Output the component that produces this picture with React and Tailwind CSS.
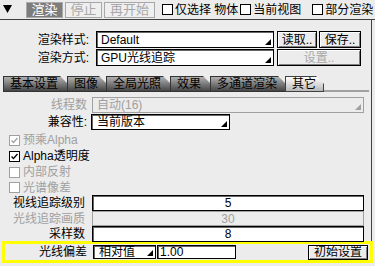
import React from "react";

function Tri({ disabled }) {
  return (
    <svg width="6" height="6" className="self-end mb-[2px] mr-[2px] shrink-0">
      <polygon points="6,0 6,6 0,6" fill={disabled ? "#a0a0a0" : "#000"} />
    </svg>
  );
}

function Check({ checked, disabled }) {
  const c = disabled ? "#a0a0a0" : "#000";
  return (
    <svg width="11" height="11" className="shrink-0">
      <rect x="0.5" y="0.5" width="10" height="10" fill="#fff" stroke={c} />
      {checked && <path d="M2.5 5.5 L4.5 7.5 L8.5 3" stroke={c} strokeWidth="1.3" fill="none" />}
    </svg>
  );
}

function Tab({ label, active, w }) {
  return (
    <div
      className={`${w} h-[16px] -mr-[1px] flex items-center pl-[6px] text-black [clip-path:polygon(0_0,calc(100%-8px)_0,100%_8px,100%_100%,0_100%)] ${
        active
          ? "bg-[linear-gradient(#ffffff,#b8b8b8)] border border-[#404040]"
          : "bg-[linear-gradient(#b0b0b0,#454545)] border border-[#333]"
      }`}
    >
      {label}
    </div>
  );
}

export default function App() {
  return (
    <div className="w-[375px] h-[266px] bg-[#ececec] overflow-hidden text-[12px] leading-[14px] text-black [font-family:'Liberation_Sans','Noto_Sans_CJK_SC',sans-serif]">
      {/* top bar */}
      <div className="h-[20px] flex items-center border-b border-[#404040] text-[13px] whitespace-nowrap">
        <svg width="9" height="8" className="ml-[3px] mb-[2px] shrink-0">
          <polygon points="0,0 9,0 4.5,8" fill="#000" />
        </svg>
        <div className="ml-[14px] w-[37px] h-[16px] shrink-0 flex items-center justify-center bg-[#7d7d7d] border border-[#a8a8a8] text-white">渲染</div>
        <div className="ml-[2px] w-[37px] h-[16px] shrink-0 flex items-center justify-center bg-[#efefef] border border-[#a8a8a8] text-[#a8a8a8]">停止</div>
        <div className="ml-[2px] w-[51px] h-[16px] shrink-0 flex items-center justify-center bg-[#efefef] border border-[#a8a8a8] text-[#a8a8a8]">再开始</div>
        <div className="ml-[7px] flex items-center gap-[2px] text-[12px] shrink-0">
          <Check />
          <span>仅选择 物体</span>
        </div>
        <div className="ml-[2px] flex items-center gap-[2px] text-[12px] shrink-0">
          <Check />
          <span>当前视图</span>
        </div>
        <div className="ml-[11px] flex items-center gap-[2px] text-[12px] shrink-0">
          <Check />
          <span>部分渲染</span>
        </div>
      </div>

      <div className="flex">
        <div className="w-[372px] h-[221px] border-r border-[#404040] flex flex-col">
          {/* row 1 */}
          <div className="mt-[11px] flex items-center h-[17px]">
            <div className="w-[89px] text-right">渲染样式:</div>
            <div className="ml-[7px] w-[178px] h-[17px] flex border border-black bg-white shadow-[inset_1px_1px_0_#666]">
              <span className="flex-1 pl-[4px] self-center">Default</span>
              <Tri />
            </div>
            <div className="ml-[3px] w-[40px] h-[17px] flex items-center justify-center border border-black shadow-[inset_1px_1px_0_#fff,inset_-1px_-1px_0_#808080]">读取..</div>
            <div className="ml-[2px] w-[42px] h-[17px] flex items-center justify-center border border-black shadow-[inset_1px_1px_0_#fff,inset_-1px_-1px_0_#808080]">保存..</div>
          </div>
          {/* row 2 */}
          <div className="mt-[1px] flex items-center h-[17px]">
            <div className="w-[89px] text-right">渲染方式:</div>
            <div className="ml-[7px] w-[178px] h-[17px] flex border border-black bg-white shadow-[inset_1px_1px_0_#666]">
              <span className="flex-1 pl-[4px] self-center">GPU光线追踪</span>
              <Tri />
            </div>
            <div className="ml-[3px] w-[84px] h-[17px] flex items-center justify-center border border-black text-[#a8a8a8] shadow-[inset_1px_1px_0_#fff,inset_-1px_-1px_0_#808080]">设置..</div>
          </div>
          {/* tabs */}
          <div className="mt-[10px] flex items-end h-[16px] pl-[3px]">
            <Tab label="基本设置" w="w-[65px]" />
            <Tab label="图像" w="w-[40px]" />
            <Tab label="全局光照" w="w-[65px]" />
            <Tab label="效果" w="w-[41px]" />
            <Tab label="多通道渲染" w="w-[76px]" />
            <Tab label="其它" w="w-[39px]" active />
            <div className="w-[46px] h-[2px] bg-[#a0a0a0]" />
          </div>
          {/* 线程数 */}
          <div className="mt-[5px] flex items-center h-[16px]">
            <div className="w-[87px] text-right text-[#a0a0a0]">线程数</div>
            <div className="ml-[5px] w-[272px] h-[16px] flex border border-[#a0a0a0] text-[#a0a0a0]">
              <span className="flex-1 pl-[4px] self-center">自动(16)</span>
              <Tri disabled />
            </div>
          </div>
          <div className="mt-[1px] flex items-center h-[16px]">
            <div className="w-[87px] text-right">兼容性:</div>
            <div className="ml-[4px] w-[139px] h-[16px] flex border border-black bg-white shadow-[inset_1px_1px_0_#666]">
              <span className="flex-1 pl-[5px] self-center">当前版本</span>
              <Tri />
            </div>
          </div>
          {/* checkboxes */}
          <div className="mt-[2px] flex flex-col pl-[9px]">
            <div className="h-[16px] flex items-center gap-[3px] text-[#a0a0a0]"><Check checked disabled />预乘Alpha</div>
            <div className="h-[16px] flex items-center gap-[3px]"><Check checked />Alpha透明度</div>
            <div className="h-[16px] flex items-center gap-[3px] text-[#a0a0a0]"><Check disabled />内部反射</div>
            <div className="h-[15px] flex items-center gap-[3px] text-[#a0a0a0]"><Check disabled />光谱像差</div>
          </div>
          {/* inputs */}
          <div className="flex items-center h-[16px]">
            <div className="w-[85px] text-right">视线追踪级别</div>
            <div className="ml-[7px] w-[272px] h-[16px] flex items-center justify-center border border-black bg-white shadow-[inset_1px_1px_0_#666]">5</div>
          </div>
          <div className="flex items-center h-[16px]">
            <div className="w-[85px] text-right text-[#a0a0a0]">光线追踪画质</div>
            <div className="ml-[7px] w-[272px] h-[15px] flex items-center justify-center border border-[#a0a0a0] text-[#a0a0a0]">30</div>
          </div>
          <div className="flex items-center h-[16px]">
            <div className="w-[85px] text-right">采样数</div>
            <div className="ml-[7px] w-[272px] h-[16px] flex items-center justify-center border border-black bg-white shadow-[inset_1px_1px_0_#666]">8</div>
          </div>
        </div>
      </div>
      {/* yellow highlighted row */}
      <div className="ml-[2px] w-[371px] h-[22px] border-[3px] border-[#ffff00] flex items-center">
        <div className="w-[82px] text-right">光线偏差</div>
        <div className="ml-[6px] w-[63px] h-[14px] flex border border-black bg-white shadow-[inset_1px_1px_0_#666]">
          <span className="flex-1 pl-[5px] self-center">相对值</span>
          <Tri />
        </div>
        <div className="ml-[1px] w-[79px] h-[14px] flex items-center border border-black bg-white shadow-[inset_1px_1px_0_#666] pl-[2px]">1.00</div>
        <div className="ml-[72px] w-[60px] h-[15px] flex items-center justify-center border border-black shadow-[inset_1px_1px_0_#fff,inset_-1px_-1px_0_#808080]">初始设置</div>
      </div>
    </div>
  );
}
